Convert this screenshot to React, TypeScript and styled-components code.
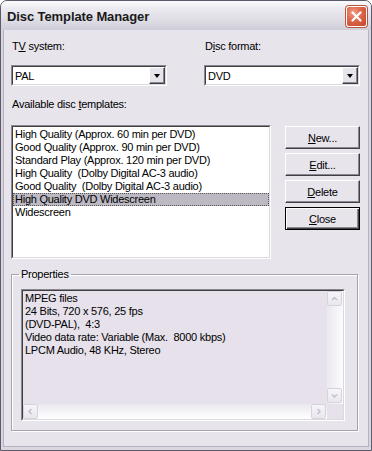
import React from "react";
import styled, { createGlobalStyle } from "styled-components";

const Global = createGlobalStyle`
  html, body { margin: 0; padding: 0; background: #ffffff; }
  body { font-family: "Liberation Sans", Arial, sans-serif; font-size: 11px; letter-spacing: -0.25px; color: #000; }
  * { box-sizing: border-box; }
`;

const BG = "#E8E4EC";

const Window = styled.div`
  width: 372px;
  height: 451px;
  display: flex;
  flex-direction: column;
  background: #D9D6E0;
  border: 1px solid #5c5b6c;
  border-radius: 7px 7px 0 0;
  overflow: hidden;
`;

const TitleBar = styled.div`
  height: 29px;
  flex: none;
  display: flex;
  align-items: center;
  justify-content: space-between;
  padding: 1px 4px 0 6px;
  background: linear-gradient(#fbfbfd 0%, #ecebf1 25%, #dddbe3 70%, #cfcdd7 100%);
`;

const Title = styled.div`
  font-family: "Liberation Sans", Arial, sans-serif;
  font-weight: bold;
  font-size: 13px;
  letter-spacing: -0.1px;
  color: #1a1a1a;
`;

const CloseBox = styled.div`
  width: 21px;
  height: 21px;
  border: 1px solid #fff;
  border-radius: 3px;
  background: radial-gradient(circle at 35% 30%, #f0a08a 0%, #e06a4c 40%, #c2432c 100%);
  box-shadow: 0 0 0 1px #b9553f;
  display: flex;
  align-items: center;
  justify-content: center;
`;

const Body = styled.div`
  flex: 1;
  margin: 0 2px 3px 2px;
  background: ${BG};
  border-left: 1px solid #b4b2c0;
  border-right: 1px solid #b4b2c0;
  border-bottom: 1px solid #b4b2c0;
  padding: 10px 8px 0 7px;
  display: flex;
  flex-direction: column;
`;

const TopRow = styled.div`
  display: flex;
  justify-content: space-between;
`;

const Field = styled.div`
  width: 156px;
  display: flex;
  flex-direction: column;
`;

const Label = styled.div<{ $mt?: number; $mb?: number }>`
  height: 13px;
  line-height: 13px;
  padding-left: 1px;
  margin-top: ${(p) => p.$mt ?? 0}px;
  margin-bottom: ${(p) => p.$mb ?? 12}px;
  white-space: nowrap;
`;

const U = styled.span`
  text-decoration: underline;
`;

const Sunken = styled.div`
  border-style: solid;
  border-width: 1px;
  border-color: #8a8794 #ffffff #ffffff #8a8794;
`;

const SunkenInner = styled.div`
  border-style: solid;
  border-width: 1px;
  border-color: #404040 #dcd8e0 #dcd8e0 #404040;
`;

const ComboOuter = styled(Sunken)`
  height: 21px;
`;

const ComboInner = styled(SunkenInner)`
  height: 100%;
  background: #fff;
  display: flex;
  align-items: center;
  justify-content: space-between;
  padding-left: 2px;
`;

const DropBtn = styled.div`
  width: 16px;
  height: 17px;
  background: ${BG};
  border-style: solid;
  border-width: 1px;
  border-color: #ffffff #404040 #404040 #ffffff;
  box-shadow: inset -1px -1px 0 #8a8794;
  display: flex;
  align-items: center;
  justify-content: center;
`;

const Arrow = styled.div`
  width: 0;
  height: 0;
  border-left: 3.5px solid transparent;
  border-right: 3.5px solid transparent;
  border-top: 4px solid #000;
  margin-top: 1px;
`;

const MidRow = styled.div`
  display: flex;
  justify-content: space-between;
  align-items: flex-start;
`;

const ListOuter = styled(Sunken)`
  width: 260px;
  height: 134px;
`;

const ListInner = styled(SunkenInner)`
  height: 100%;
  background: #fff;
  padding: 1px 0;
`;

const Item = styled.div<{ $sel?: boolean }>`
  height: 13px;
  line-height: 13px;
  padding-left: 2px;
  white-space: pre;
  background: ${(p) => (p.$sel ? "#bcb9c2" : "transparent")};
  outline: ${(p) => (p.$sel ? "1px dotted #555" : "none")};
  outline-offset: -1px;
`;

const Buttons = styled.div`
  width: 75px;
  display: flex;
  flex-direction: column;
  gap: 4px;
  margin-top: 1px;
`;

const Button = styled.div<{ $def?: boolean }>`
  height: 23px;
  display: flex;
  align-items: center;
  justify-content: center;
  background: ${BG};
  border-style: solid;
  border-width: 1px;
  border-color: ${(p) => (p.$def ? "#000" : "#ffffff #404040 #404040 #ffffff")};
  box-shadow: ${(p) =>
    p.$def
      ? "inset 1px 1px 0 #ffffff, inset -1px -1px 0 #404040, inset -2px -2px 0 #8a8794"
      : "inset -1px -1px 0 #8a8794"};
`;

const Group = styled.fieldset`
  margin: 9px 0 0 0;
  padding: 8px 12px 11px 9px;
  width: 347px;
  height: 163px;
  border: 1px solid #a5a3ae;
  box-shadow: inset 1px 1px 0 #fff, 1px 1px 0 #fff;
  border-radius: 0;
`;

const Legend = styled.legend`
  padding: 0 2px;
  margin-left: -2px;
  line-height: 13px;
`;

const TextOuter = styled(Sunken)`
  height: 132px;
`;

const TextInner = styled(SunkenInner)`
  height: 100%;
  background: #e6e1ea;
  display: grid;
  grid-template-columns: 1fr 16px;
  grid-template-rows: 1fr 15px;
`;

const TextContent = styled.div`
  padding: 1px 2px;
  line-height: 13px;
`;

const TextLine = styled.div`
  white-space: pre;
`;

const VScroll = styled.div`
  display: flex;
  flex-direction: column;
  justify-content: space-between;
  background: linear-gradient(90deg, #ebe8ef, #fbfbfd);
  padding-bottom: 1px;
`;

const HScroll = styled.div`
  display: flex;
  justify-content: space-between;
  background: linear-gradient(#ebe8ef, #ffffff);
  padding-right: 1px;
`;

const Corner = styled.div`
  background: #e6e1ea;
`;

const ArrowBox = styled.div`
  width: 15px;
  height: 15px;
  border: 1px solid #d6d3dc;
  border-radius: 2px;
  background: linear-gradient(#f6f5f8, #e9e7ee);
  display: flex;
  align-items: center;
  justify-content: center;
`;

const Chevron = ({ dir }: { dir: "up" | "down" | "left" | "right" }) => {
  const d = {
    up: "M2 6 L4.5 3.5 L7 6",
    down: "M2 3.5 L4.5 6 L7 3.5",
    left: "M5.5 2 L3 4.5 L5.5 7",
    right: "M3.5 2 L6 4.5 L3.5 7",
  }[dir];
  return (
    <svg width="9" height="9" viewBox="0 0 9 9">
      <path d={d} fill="none" stroke="#c4c0cb" strokeWidth="1.5" />
    </svg>
  );
};

const templates = [
  "High Quality (Approx. 60 min per DVD)",
  "Good Quality (Approx. 90 min per DVD)",
  "Standard Play (Approx. 120 min per DVD)",
  "High Quality  (Dolby Digital AC-3 audio)",
  "Good Quality  (Dolby Digital AC-3 audio)",
  "High Quality DVD Widescreen",
  "Widescreen",
];

const props = [
  "MPEG files",
  "24 Bits, 720 x 576, 25 fps",
  "(DVD-PAL),  4:3",
  "Video data rate: Variable (Max.  8000 kbps)",
  "LPCM Audio, 48 KHz, Stereo",
];

export default function App() {
  return (
    <>
      <Global />
      <Window>
        <TitleBar>
          <Title>Disc Template Manager</Title>
          <CloseBox>
            <svg width="11" height="11" viewBox="0 0 11 11">
              <path d="M1.5 1.5 L9.5 9.5 M9.5 1.5 L1.5 9.5" stroke="#fff" strokeWidth="2.2" strokeLinecap="round" />
            </svg>
          </CloseBox>
        </TitleBar>
        <Body>
          <TopRow>
            <Field>
              <Label>
                T<U>V</U> system:
              </Label>
              <ComboOuter>
                <ComboInner>
                  <span>PAL</span>
                  <DropBtn>
                    <Arrow />
                  </DropBtn>
                </ComboInner>
              </ComboOuter>
            </Field>
            <Field>
              <Label>
                D<U>i</U>sc format:
              </Label>
              <ComboOuter>
                <ComboInner>
                  <span>DVD</span>
                  <DropBtn>
                    <Arrow />
                  </DropBtn>
                </ComboInner>
              </ComboOuter>
            </Field>
          </TopRow>
          <Label $mt={12} $mb={14}>
            Available disc <U>t</U>emplates:
          </Label>
          <MidRow>
            <ListOuter>
              <ListInner>
                {templates.map((t, i) => (
                  <Item key={t} $sel={i === 5}>
                    {t}
                  </Item>
                ))}
              </ListInner>
            </ListOuter>
            <Buttons>
              <Button>
                <span>
                  <U>N</U>ew...
                </span>
              </Button>
              <Button>
                <span>
                  <U>E</U>dit...
                </span>
              </Button>
              <Button>
                <span>
                  <U>D</U>elete
                </span>
              </Button>
              <Button $def>
                <span>
                  <U>C</U>lose
                </span>
              </Button>
            </Buttons>
          </MidRow>
          <Group>
            <Legend>Properties</Legend>
            <TextOuter>
              <TextInner>
                <TextContent>
                  {props.map((p) => (
                    <TextLine key={p}>{p}</TextLine>
                  ))}
                </TextContent>
                <VScroll>
                  <ArrowBox>
                    <Chevron dir="up" />
                  </ArrowBox>
                  <ArrowBox>
                    <Chevron dir="down" />
                  </ArrowBox>
                </VScroll>
                <HScroll>
                  <ArrowBox>
                    <Chevron dir="left" />
                  </ArrowBox>
                  <ArrowBox>
                    <Chevron dir="right" />
                  </ArrowBox>
                </HScroll>
                <Corner />
              </TextInner>
            </TextOuter>
          </Group>
        </Body>
      </Window>
    </>
  );
}
